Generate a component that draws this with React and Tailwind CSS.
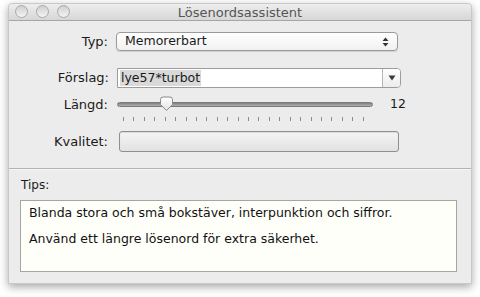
import React from "react";

const font = { fontFamily: '"DejaVu Sans", "Liberation Sans", sans-serif' };

function Light() {
  return (
    <div className="h-[13px] w-[13px] rounded-full border border-[#a9a9a9] bg-gradient-to-b from-[#cfcfcf] to-[#f4f4f4]" />
  );
}

function Thumb() {
  return (
    <svg width="15" height="16" viewBox="0 0 15 16" className="absolute left-[42px] top-0">
      <defs>
        <linearGradient id="tg" x1="0" y1="0" x2="0" y2="1">
          <stop offset="0" stopColor="#ffffff" />
          <stop offset="1" stopColor="#e4e4e4" />
        </linearGradient>
      </defs>
      <path
        d="M1.5 3.5 Q1.5 1 4 1 H11 Q13.5 1 13.5 3.5 V8.5 L7.5 14.5 L1.5 8.5 Z"
        fill="url(#tg)"
        stroke="#8a8a8a"
        strokeWidth="1"
      />
    </svg>
  );
}

export default function App() {
  const ticks = Array.from({ length: 24 }, (_, i) => i);
  return (
    <div className="w-[480px] h-[297px] bg-white pt-[3px] pl-[8px] overflow-hidden" style={font}>
      <div className="w-[464px] h-[281px] bg-[#ececec] border border-[#c8c8c8] rounded-t-[4px] shadow-[0_3px_8px_rgba(0,0,0,0.35)] flex flex-col">
        {/* titlebar */}
        <div className="relative h-[17px] flex items-center border-b border-[#a6a6a6] bg-gradient-to-b from-[#eeeeee] to-[#d6d6d6] rounded-t-[4px]">
          <div className="absolute left-[6px] top-[1px] flex gap-[8px]">
            <Light />
            <Light />
            <Light />
          </div>
          <div className="w-full text-center text-[13px] leading-none text-[#555]">Lösenordsassistent</div>
        </div>

        {/* form */}
        <div className="flex flex-col pt-[11px] pb-[16px] text-[13px] text-[#1a1a1a] border-b border-[#b3b3b3]">
          <div className="flex items-center h-[19px]">
            <div className="w-[99px] text-right">Typ:</div>
            <div className="ml-[8px] w-[282px] h-[19px] rounded-[4px] border border-[#9a9a9a] bg-gradient-to-b from-[#ffffff] to-[#f1f1f1] flex items-center justify-between pl-[8px] pr-[8px] shadow-[0_1px_1px_rgba(0,0,0,0.12)]">
              <span className="text-[12.5px]">Memorerbart</span>
              <svg width="7" height="10" viewBox="0 0 7 10">
                <path d="M0.5 4 L3.5 0.5 L6.5 4 Z" fill="#333" />
                <path d="M0.5 6 L3.5 9.5 L6.5 6 Z" fill="#333" />
              </svg>
            </div>
          </div>

          <div className="flex items-center h-[20px] mt-[17px]">
            <div className="w-[100px] text-right">Förslag:</div>
            <div className="ml-[8px] w-[284px] h-[20px] border border-[#9c9c9c] bg-white flex items-stretch rounded-r-[4px]">
              <div className="flex-1 flex items-center pl-[2px]">
                <span className="bg-[#d9d9d9] px-[1px] leading-[16px] text-[12.5px]">lye57*turbot</span>
              </div>
              <div className="w-[18px] border-l border-[#b5b5b5] bg-gradient-to-b from-[#ffffff] to-[#ececec] flex items-center justify-center rounded-r-[3px]">
                <svg width="8" height="6" viewBox="0 0 8 6">
                  <path d="M0.5 0.5 L7.5 0.5 L4 5.5 Z" fill="#3a3a3a" />
                </svg>
              </div>
            </div>
          </div>

          <div className="flex h-[26px] mt-[8px]">
            <div className="w-[99px] text-right leading-[18px]">Längd:</div>
            <div className="ml-[9px] w-[256px] relative">
              <div className="absolute left-0 right-0 top-[6px] h-[5px] rounded-full bg-gradient-to-b from-[#7f7f7f] to-[#b0b0b0] border border-[#7a7a7a]" />
              <Thumb />
              <div className="absolute left-[6px] top-[21px] flex w-[241px] justify-between">
                {ticks.map((i) => (
                  <div key={i} className="w-px h-[4px] bg-[#8d8d8d]" />
                ))}
              </div>
            </div>
            <div className="ml-[17px] leading-[18px] mt-[-1px] text-[12.5px]">12</div>
          </div>

          <div className="flex items-center h-[21px] mt-[9px]">
            <div className="w-[99px] text-right">Kvalitet:</div>
            <div className="ml-[11px] w-[280px] h-[21px] rounded-[3px] border border-[#8f8f8f] bg-gradient-to-b from-[#f4f4f4] to-[#e2e2e2] shadow-[inset_0_1px_1px_rgba(0,0,0,0.1)]" />
          </div>
        </div>

        {/* tips */}
        <div className="flex-1 pl-[11px] pr-[14px] pt-[7px] pb-[11px] flex flex-col border-t border-[#f6f6f6]">
          <div className="text-[12px] text-[#1a1a1a] leading-[16px] ml-px">Tips:</div>
          <div className="mt-[7px] flex-1 border border-[#a5a5a5] bg-[#fffffa] px-[8px] text-[12.5px] text-[#111] leading-[24px]">
            <div>Blanda stora och små bokstäver, interpunktion och siffror.</div>
            <div className="mt-[2px]">Använd ett längre lösenord för extra säkerhet.</div>
          </div>
        </div>
      </div>
    </div>
  );
}
